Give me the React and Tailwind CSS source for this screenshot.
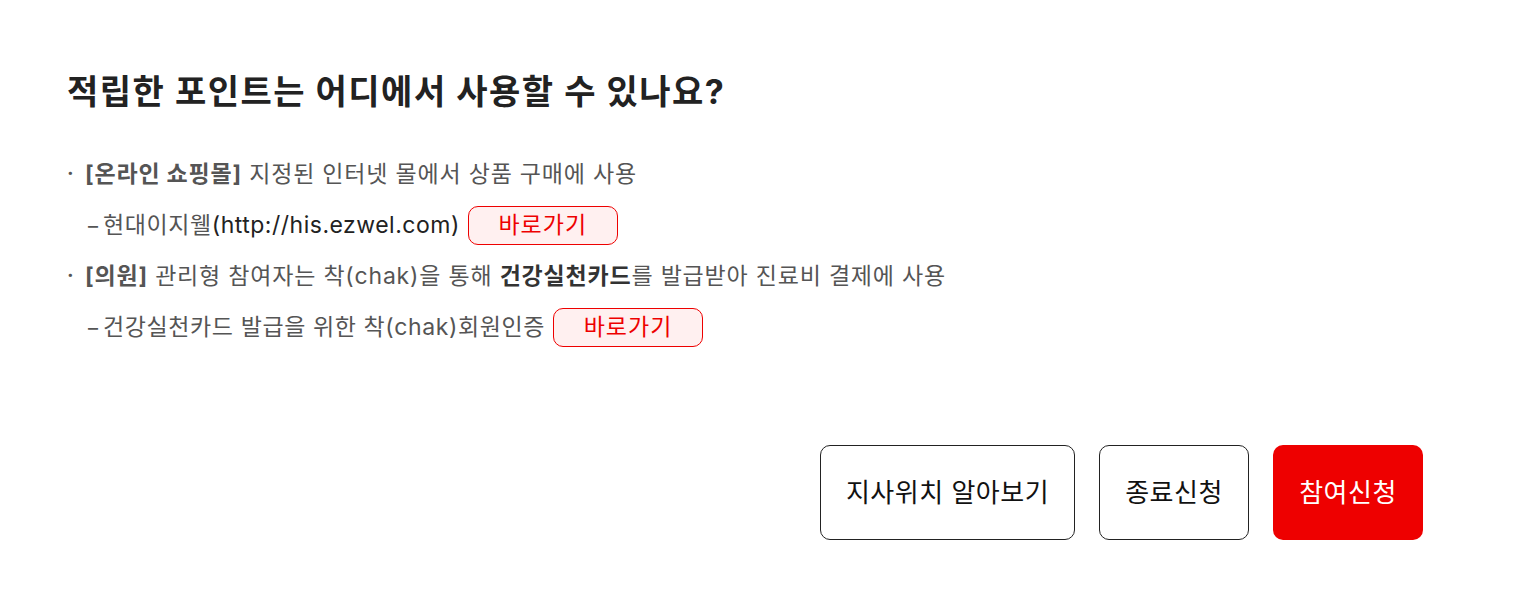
const font = { fontFamily: 'Inter, "Noto Sans CJK KR", "Noto Sans", sans-serif' };

const GoButton = () => (
  <button className="ml-[8px] h-[39px] w-[150px] rounded-[10px] border border-[#ee0000] bg-[#fff0f0] text-[23px] text-[#ee0000] leading-none tracking-[1px]">
    바로가기
  </button>
);

const Bullet = ({ children }) => (
  <div className="flex h-[51px] items-center">
    <span className="w-[18px] -translate-y-[2px] text-[20px] font-bold text-[#555]">·</span>
    <p className="text-[23px] text-[#555] tracking-[0.8px]">{children}</p>
  </div>
);

const Sub = ({ children }) => (
  <div className="flex h-[51px] items-center pl-[21px]">
    <span className="mr-[5px] text-[20px] text-[#555]">–</span>
    <p className="text-[23px] text-[#555] tracking-[0.6px]">{children}</p>
  </div>
);

export default function App() {
  return (
    <div className="min-h-[609px] w-[1523px] bg-white pl-[67px] pr-[100px] pt-[72px]" style={font}>
      <h1 className="text-[34px] font-bold leading-[40px] text-[#222] tracking-[1.5px]">
        적립한 포인트는 어디에서 사용할 수 있나요?
      </h1>

      {/* LIST */}
      <div className="mt-[37px] flex flex-col">
        <Bullet>
          <b className="font-bold">[온라인 쇼핑몰]</b> 지정된 인터넷 몰에서 상품 구매에 사용
        </Bullet>
        <Sub>
          현대이지웰<span className="text-[#222] tracking-[0.5px]">(http://his.ezwel.com)</span>
          <GoButton />
        </Sub>
        <Bullet>
          <b className="font-bold">[의원]</b> 관리형 참여자는 착(chak)을 통해{" "}
          <b className="font-bold text-[#333]">건강실천카드</b>를 발급받아 진료비 결제에 사용
        </Bullet>
        <Sub>
          건강실천카드 발급을 위한 착(chak)회원인증
          <GoButton />
        </Sub>
      </div>

      {/* BUTTONS */}
      <div className="mt-[92px] flex justify-end gap-[24px]">
        <button className="h-[95px] w-[255px] rounded-[10px] border border-[#222] bg-white text-[26px] text-[#111] tracking-[0.5px]">
          지사위치 알아보기
        </button>
        <button className="h-[95px] w-[150px] rounded-[10px] border border-[#222] bg-white text-[26px] text-[#111] tracking-[0.5px]">
          종료신청
        </button>
        <button className="h-[95px] w-[150px] rounded-[10px] bg-[#ee0000] text-[26px] text-white tracking-[0.5px]">
          참여신청
        </button>
      </div>
    </div>
  );
}
